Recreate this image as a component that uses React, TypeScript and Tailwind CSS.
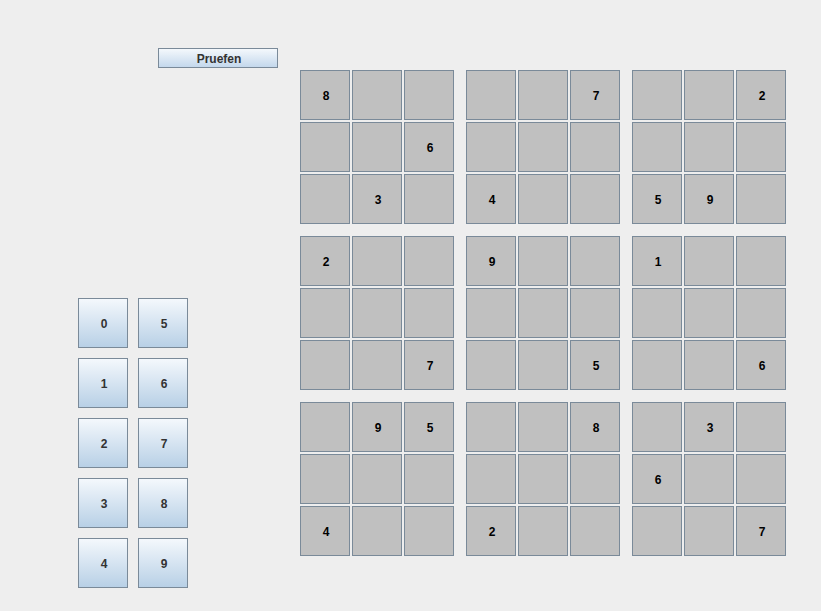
import React from "react"

const board: string[][] = [
  ["8", "", "", "", "", "7", "", "", "2"],
  ["", "", "6", "", "", "", "", "", ""],
  ["", "3", "", "4", "", "", "5", "9", ""],
  ["2", "", "", "9", "", "", "1", "", ""],
  ["", "", "", "", "", "", "", "", ""],
  ["", "", "7", "", "", "5", "", "", "6"],
  ["", "9", "5", "", "", "8", "", "3", ""],
  ["", "", "", "", "", "", "6", "", ""],
  ["4", "", "", "2", "", "", "", "", "7"],
]

const font = { fontFamily: '"Liberation Sans", Arial, sans-serif' }

function Block({ br, bc }: { br: number; bc: number }) {
  const cells = []
  for (let r = 0; r < 3; r++) {
    for (let c = 0; c < 3; c++) {
      const v = board[br * 3 + r][bc * 3 + c]
      cells.push(
        <div
          key={`${r}-${c}`}
          className="w-[50px] h-[50px] pt-[2px] pl-[2px] bg-[#c0c0c0] border border-[#7a8a99] flex items-center justify-center text-[12px] font-bold text-black"
        >
          {v}
        </div>
      )
    }
  }
  return <div className="grid grid-cols-3 gap-[2px]">{cells}</div>
}

function PadButton({ n }: { n: number }) {
  return (
    <button className="w-[50px] h-[50px] pt-[2px] pl-[2px] border border-[#7a8a99] bg-gradient-to-b from-[#f4f8fc] to-[#b8d0e6] flex items-center justify-center text-[12px] font-bold text-[#333]">
      {n}
    </button>
  )
}

export default function App() {
  return (
    <div className="w-[821px] h-[611px] bg-[#eeeeee] flex overflow-hidden" style={font}>
      <div className="w-[300px] flex flex-col">
        <div className="pt-[48px] pl-[158px]">
          <button className="w-[120px] h-[20px] pt-[2px] pl-[2px] border border-[#7a8a99] bg-gradient-to-b from-[#f4f8fc] to-[#c4d8ec] text-[12px] font-bold text-[#333] flex items-center justify-center">
            Pruefen
          </button>
        </div>
        <div className="pt-[230px] pl-[78px] grid grid-cols-[50px_50px] grid-rows-5 grid-flow-col gap-x-[10px] gap-y-[10px] w-max">
          {[0, 1, 2, 3, 4, 5, 6, 7, 8, 9].map((n) => (
            <PadButton key={n} n={n} />
          ))}
        </div>
      </div>
      <div className="pt-[70px] grid grid-cols-3 gap-[12px] h-max">
        {[0, 1, 2].map((br) =>
          [0, 1, 2].map((bc) => <Block key={`${br}${bc}`} br={br} bc={bc} />)
        )}
      </div>
    </div>
  )
}
